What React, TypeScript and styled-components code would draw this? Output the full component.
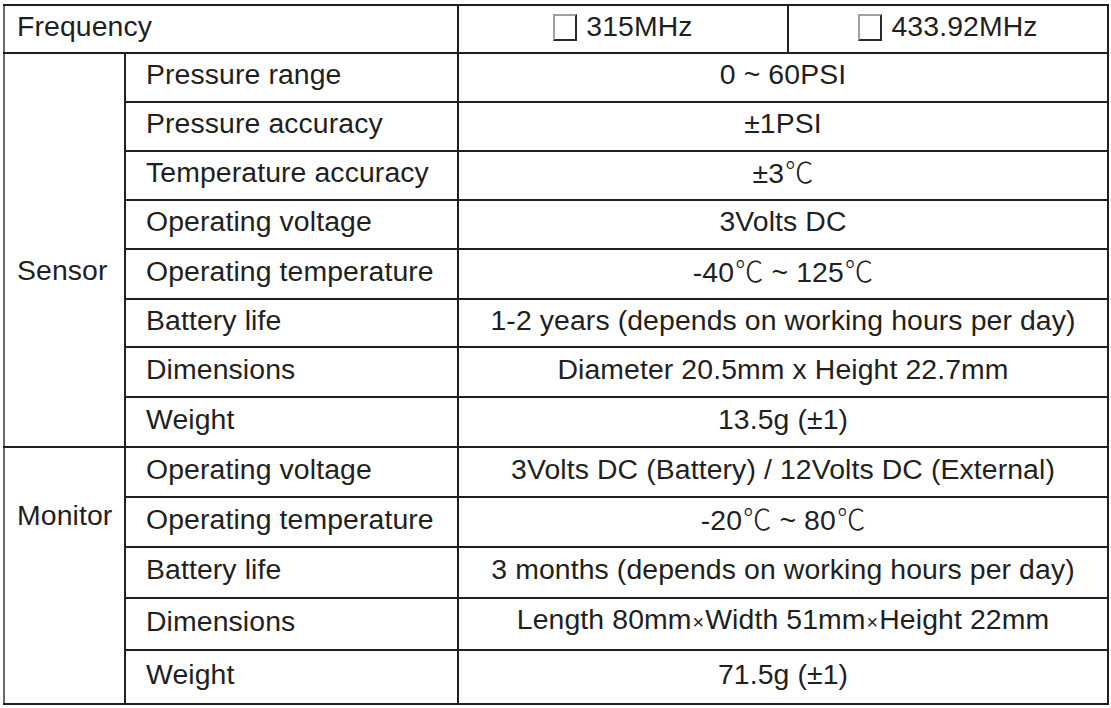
import React from "react";
import styled, { createGlobalStyle } from "styled-components";

const Global = createGlobalStyle`
  html, body { margin: 0; padding: 0; background: #ffffff; }
  body { font-family: "Liberation Sans", Arial, sans-serif; color: #231f20; }
`;

const Page = styled.div`
  padding: 4px 0 0 3px;
`;

const Table = styled.table`
  border-collapse: collapse;
  table-layout: fixed;
  width: 1104px;
  font-size: 28.4px;
  letter-spacing: 0.1px;
  border-left: 2px solid #6a6a6a;
  border-top: 2px solid #2a2a2a;
  border-right: 2px solid #3a3a3a;
  border-bottom: 2px solid #5a5a5a;
`;

const Row = styled.tr<{ $h: number }>`
  height: ${(p) => p.$h}px;
`;

const Cell = styled.td<{ $align?: "left" | "center"; $pl?: number }>`
  border: 2px solid #231f20;
  padding: 0 0 7px ${(p) => p.$pl ?? 0}px;
  text-align: ${(p) => p.$align ?? "center"};
  vertical-align: middle;
  line-height: 32px;
  white-space: nowrap;
  overflow: hidden;
`;

const GroupCell = styled.td<{ $top: number }>`
  border: 2px solid #231f20;
  border-left: none;
  padding: ${(p) => p.$top}px 0 0 12px;
  vertical-align: top;
  text-align: left;
  line-height: 32px;
`;

const Box = styled.span`
  display: inline-block;
  width: 24px;
  height: 27px;
  box-sizing: border-box;
  border-left: 2px solid #a0a0a0;
  border-top: 2px solid #a0a0a0;
  border-right: 2px solid #2a2a2a;
  border-bottom: 2px solid #2a2a2a;
  vertical-align: -5px;
  margin-right: 9px;
`;

const Deg = styled.span`
  font-family: "Noto Sans CJK JP", "Noto Sans CJK SC", sans-serif;
  font-weight: 300;
  font-size: 1em;
  letter-spacing: 0;
  margin-left: 1px;
`;

const Times = styled.span`
  font-size: 0.7em;
  margin: 0 1px;
`;

type Spec = { label: string; value: React.ReactNode; h: number };

const C = () => <Deg>℃</Deg>;

const sensor: Spec[] = [
  { label: "Pressure range", value: "0 ~ 60PSI", h: 49 },
  { label: "Pressure accuracy", value: "±1PSI", h: 49 },
  { label: "Temperature accuracy", value: <>±3<C /></>, h: 49 },
  { label: "Operating voltage", value: "3Volts DC", h: 49 },
  { label: "Operating temperature", value: <>-40<C /> ~ 125<C /></>, h: 50 },
  { label: "Battery life", value: "1-2 years (depends on working hours per day)", h: 48 },
  { label: "Dimensions", value: "Diameter 20.5mm x Height 22.7mm", h: 50 },
  { label: "Weight", value: "13.5g (±1)", h: 50 },
];

const monitor: Spec[] = [
  { label: "Operating voltage", value: "3Volts DC (Battery) / 12Volts DC (External)", h: 50 },
  { label: "Operating temperature", value: <>-20<C /> ~ 80<C /></>, h: 50 },
  { label: "Battery life", value: "3 months (depends on working hours per day)", h: 51 },
  {
    label: "Dimensions",
    value: <>Length 80mm<Times>×</Times>Width 51mm<Times>×</Times>Height 22mm</>,
    h: 52,
  },
  { label: "Weight", value: "71.5g (±1)", h: 54 },
];

function Group({ name, rows, top }: { name: string; rows: Spec[]; top: number }) {
  return (
    <>
      {rows.map((r, i) => (
        <Row key={r.label + i} $h={r.h}>
          {i === 0 && (
            <GroupCell rowSpan={rows.length} $top={top}>
              {name}
            </GroupCell>
          )}
          <Cell $align="left" $pl={20}>{r.label}</Cell>
          <Cell colSpan={2}>{r.value}</Cell>
        </Row>
      ))}
    </>
  );
}

export default function App() {
  return (
    <Page>
      <Global />
      <Table>
        <colgroup>
          <col style={{ width: 121 }} />
          <col style={{ width: 333 }} />
          <col style={{ width: 330 }} />
          <col style={{ width: 320 }} />
        </colgroup>
        <tbody>
          <Row $h={48}>
            <Cell colSpan={2} $align="left" $pl={12} style={{ borderLeft: "none" }}>
              Frequency
            </Cell>
            <Cell>
              <Box />315MHz
            </Cell>
            <Cell>
              <Box />433.92MHz
            </Cell>
          </Row>
          <Group name="Sensor" rows={sensor} top={200} />
          <Group name="Monitor" rows={monitor} top={51} />
        </tbody>
      </Table>
    </Page>
  );
}
